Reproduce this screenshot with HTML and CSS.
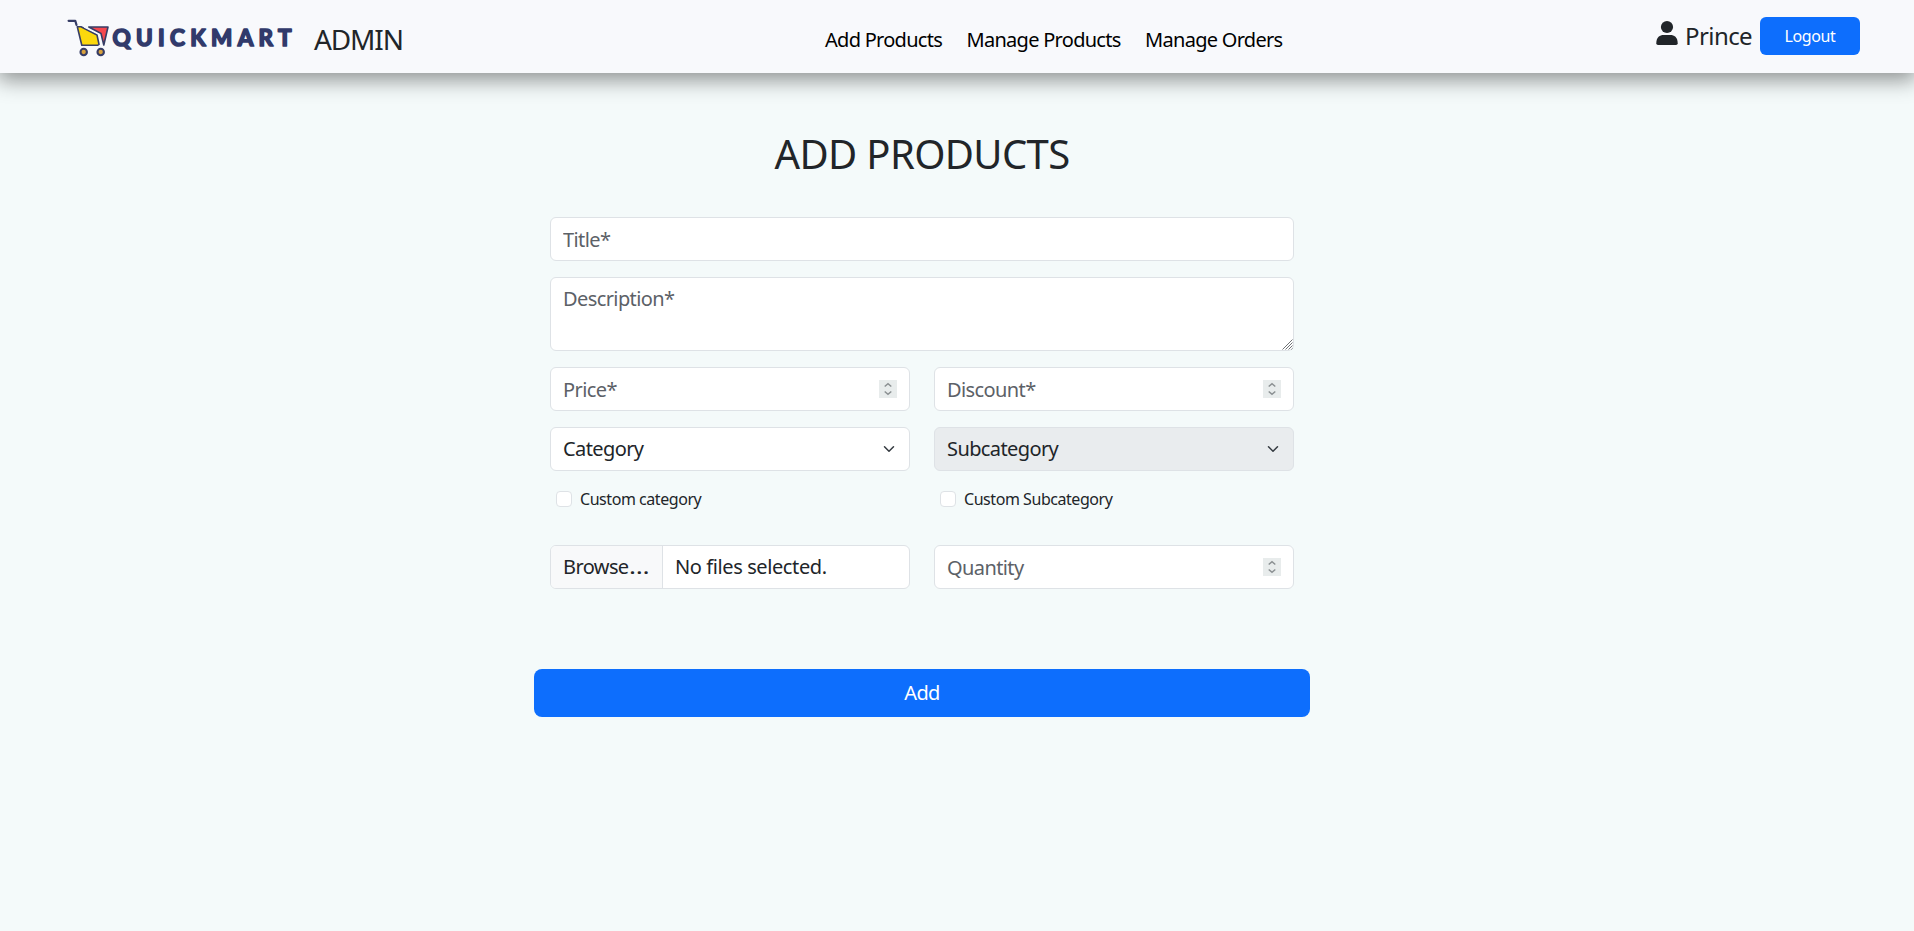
FILE: index.html
```html
<!DOCTYPE html>
<html lang="en">
<head>
<meta charset="utf-8">
<title>Quickmart Admin</title>
<link rel="stylesheet" href="styles.css">
</head>
<body>
<header class="navbar">
  <div class="brand">
    <svg class="logo" width="228" height="44" viewBox="0 0 228 44">
      <g stroke="#363d66" stroke-width="1.6" stroke-linejoin="round" stroke-linecap="round">
        <path d="M2.6 5.8H9.3L10.5 10" fill="none" stroke-width="2.2"/>
        <path d="M22.8 12H42L37.8 30L35 18.5Z" fill="#f5484f"/>
        <path d="M11.3 11.8H15L31 20L33 29.3L31.5 30.3H15.8Z" fill="#fbd80d"/>
        <path d="M18.5 12.2L33.2 19.2L35.2 29" fill="none" stroke="#f8f9fc" stroke-width="1.1"/>
        <circle cx="17.7" cy="37" r="3.2" fill="#d9a13c" stroke-width="2.1"/>
        <circle cx="34.7" cy="37" r="3.2" fill="#d9a13c" stroke-width="2.1"/>
      </g>
      <text class="wordmark" x="46.5" y="30.8" textLength="179">QUICKMART</text>
    </svg>
    <span class="role">ADMIN</span>
  </div>
  <nav class="links">
    <a>Add Products</a>
    <a>Manage Products</a>
    <a>Manage Orders</a>
  </nav>
  <div class="account">
    <svg class="person" width="22" height="28" viewBox="0 0 22 28" fill="#212529"><circle cx="11" cy="10" r="6.1"/><path d="M.3 26.3C.3 20 4 18 7.5 18H14.5C18 18 21.7 20 21.7 26.3Q21.7 28 20 28H2Q.3 28 .3 26.3Z"/></svg>
    <span class="user">Prince</span>
    <button class="logout">Logout</button>
  </div>
</header>
<main class="page">
  <h1>ADD PRODUCTS</h1>
  <form class="product-form">
    <input class="field wide" type="text" placeholder="Title*">
    <div class="area wide">
      <textarea class="field" placeholder="Description*"></textarea>
      <svg class="grip" width="11" height="11" viewBox="0 0 11 11" stroke="#6f7376" stroke-width="1"><path d="M.5 10.5L10.5 .5M3.5 10.5L10.5 3.5M6.5 10.5L10.5 6.5M9.5 10.5L10.5 9.5"/></svg>
    </div>
    <div class="field number"><input type="text" placeholder="Price*"><svg class="spin" viewBox="0 0 18 18"><path d="M5.7 6.5L9 3.7L12.3 6.5M5.7 11.5L9 14.3L12.3 11.5"/></svg></div>
    <div class="field number"><input type="text" placeholder="Discount*"><svg class="spin" viewBox="0 0 18 18"><path d="M5.7 6.5L9 3.7L12.3 6.5M5.7 11.5L9 14.3L12.3 11.5"/></svg></div>
    <div class="field select"><span>Category</span><svg class="chevron" viewBox="0 0 16 16"><path d="m2 5 6 6 6-6"/></svg></div>
    <div class="field select disabled"><span>Subcategory</span><svg class="chevron" viewBox="0 0 16 16"><path d="m2 5 6 6 6-6"/></svg></div>
    <label class="check"><input type="checkbox"><span>Custom category</span></label>
    <label class="check"><input type="checkbox"><span>Custom Subcategory</span></label>
    <div class="field file"><span class="browse">Browse<span class="dots">…</span></span><span class="chosen">No files selected.</span></div>
    <div class="field number"><input type="text" placeholder="Quantity"><svg class="spin" viewBox="0 0 18 18"><path d="M5.7 6.5L9 3.7L12.3 6.5M5.7 11.5L9 14.3L12.3 11.5"/></svg></div>
  </form>
  <button class="add">Add</button>
</main>
</body>
</html>
```
FILE: styles.css
```css
* { box-sizing: border-box; }
body {
  margin: 0;
  min-height: 931px;
  overflow: hidden;
  background: #f4fafa;
  color: #212529;
  font: 20px/30px "Noto Sans", sans-serif;
  letter-spacing: -0.03em;
}
input, textarea, button { font: inherit; letter-spacing: inherit; }
.navbar {
  display: grid;
  grid-template-columns: 759px auto 1fr;
  height: 73px;
  padding: 0 54px 0 66px;
  background: #f8f9fc;
  box-shadow: 0 5px 20px 2px rgba(0, 0, 0, .42);
}
.brand { display: flex; align-items: flex-start; padding-top: 15px; gap: 20px; }
.logo { flex: none; }
.wordmark {
  font: 700 22.5px Lato, sans-serif;
  letter-spacing: 0;
  fill: #313a6b;
  stroke: #313a6b;
  stroke-width: 1.7;
  stroke-linejoin: round;
}
.role { font-size: 28px; line-height: 48px; letter-spacing: -0.04em; }
.links { display: flex; gap: 24.5px; padding-top: 25px; color: #000; letter-spacing: -0.036em; }
.account { display: flex; justify-content: flex-end; align-items: flex-start; padding-top: 17px; }
.person { margin-right: 7px; }
.user { font-size: 24px; line-height: 38px; margin-right: 8px; }
.logout {
  width: 100px; height: 38px; padding: 0;
  border: 0; border-radius: 6px;
  background: #0d6efd; color: #fff;
  font-size: 16px; line-height: 38px;
  letter-spacing: -0.026em;
}
.page { width: 776px; margin-left: 534px; }
h1 {
  margin: 0;
  padding-top: 57px;
  height: 144px;
  text-align: center;
  font-size: 40px; line-height: 48px; font-weight: 400;
  letter-spacing: -0.016em;
}
.product-form { display: grid; grid-template-columns: 360px 360px; gap: 16px 24px; padding: 0 16px; }
.wide { grid-column: 1 / 3; }
.field {
  display: flex; align-items: center;
  width: 100%; height: 44px; padding: 0 12px;
  border: 1px solid #dee2e6; border-radius: 6px;
  background: #fff; outline: 0;
}
.area { position: relative; height: 74px; }
.area .field { display: block; height: 74px; padding-top: 6px; resize: none; }
.grip { position: absolute; right: 1px; bottom: 1px; }
::placeholder { color: #5c6167; opacity: 1; }
.number input { flex: 1; min-width: 0; height: 40px; padding: 0; border: 0; outline: 0; background: none; }
.spin { width: 18px; height: 18px; background: #e8ecec; fill: none; stroke: #8b9092; stroke-width: 1.5; }
.select { justify-content: space-between; }
.chevron { width: 12px; height: 12px; margin-right: 2px; fill: none; stroke: #343a40; stroke-width: 2; stroke-linecap: round; stroke-linejoin: round; }
.disabled { background: #e9ecee; }
.check { display: flex; align-items: flex-start; height: 42px; padding: 4px 0 0 6px; gap: 8px; font-size: 16px; line-height: 16px; letter-spacing: -0.028em; }
.check input { appearance: none; width: 16px; height: 16px; margin: 0; border: 1px solid #dee2e6; border-radius: 4px; background: #fff; }
.file { padding: 0; overflow: hidden; }
.browse { width: 112px; height: 42px; padding-left: 12px; line-height: 42px; background: #f8f9fa; border-right: 1px solid #dee2e6; }
.dots { display: inline-block; transform: scaleX(1.3); transform-origin: left; }
.chosen { padding-left: 12px; letter-spacing: -0.02em; }
.add {
  display: block; width: 776px; height: 48px; margin-top: 80px; padding: 0;
  border: 0; border-radius: 8px;
  background: #0d6efd; color: #fff;
}
```
